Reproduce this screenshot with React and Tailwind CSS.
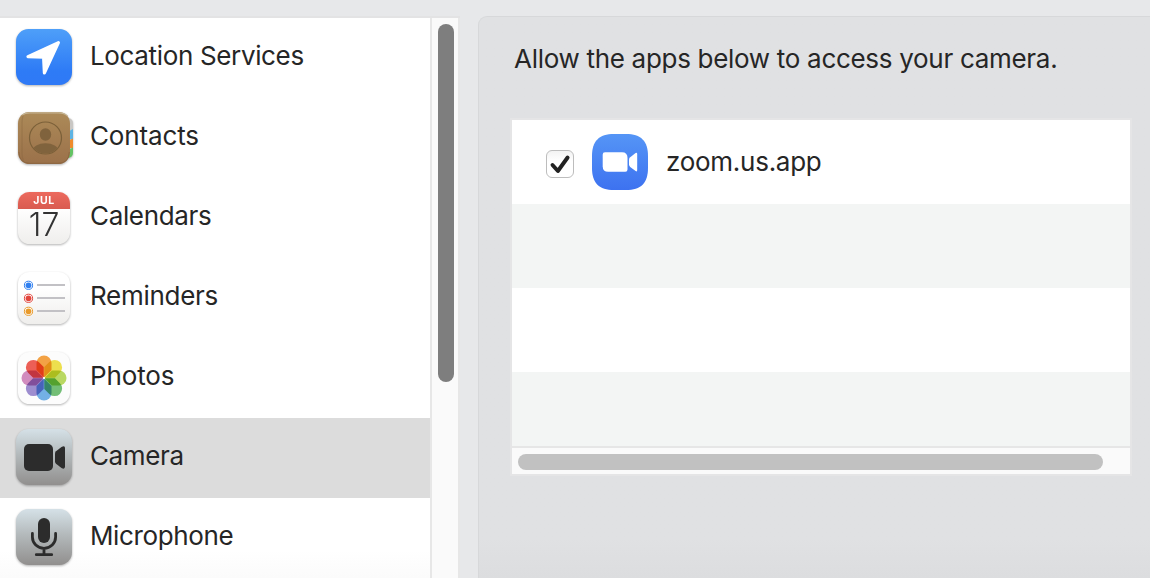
import { useState } from "react";

const LocationIcon = () => (
  <>
    <defs>
      <linearGradient id="loc" x1="0" y1="0" x2="0" y2="1">
        <stop offset="0" stopColor="#4e9ff9"/>
        <stop offset="0.75" stopColor="#2e7bf6"/>
        <stop offset="1" stopColor="#2f79f6"/>
      </linearGradient>
    </defs>
    <rect width="56" height="56" rx="12.5" fill="url(#loc)"/>
    <path d="M42.4 13.6 L12 27.6 L27.6 28.2 L28.4 43.8Z" fill="#fff" stroke="#fff" strokeWidth="3.2" strokeLinejoin="round"/>
  </>
);

const ContactsIcon = () => (
  <>
    <defs>
      <linearGradient id="leather" x1="0" y1="0" x2="0" y2="1">
        <stop offset="0" stopColor="#ac8a58"/>
        <stop offset="1" stopColor="#9b714a"/>
      </linearGradient>
      <clipPath id="contactTabs"><rect x="40" y="9" width="17" height="40" rx="5"/></clipPath>
      <clipPath id="contactFace"><circle cx="29.5" cy="29" r="15.5"/></clipPath>
    </defs>
    <g clipPath="url(#contactTabs)">
      <rect x="50" y="7" width="7" height="15" fill="#c9c7c4"/>
      <path d="M50 24 L57 20 V30 H50Z" fill="#5eb4e4"/>
      <path d="M50 33 L57 29.5 V39 H50Z" fill="#ef8b2c"/>
      <path d="M50 42.5 L57 38.5 V50 H50Z" fill="#63c363"/>
    </g>
    <rect x="2" y="3" width="52" height="52" rx="11.5" fill="url(#leather)"/>
    <path d="M7 6.5 Q6 10 6 14 V44 Q6 49 7.5 51.5" fill="none" stroke="#80603a" strokeOpacity="0.3" strokeWidth="1.3"/>
    <path d="M6 6 Q9 3.8 14 3.8 H42 Q49 3.8 51.5 7" fill="none" stroke="#c5b493" strokeWidth="1.2"/>
    <path d="M3 43 Q3 54.3 14 54.3 H42 Q53 54.3 53.3 43" fill="none" stroke="#7c5937" strokeOpacity="0.5"/>
    <circle cx="29.5" cy="29" r="16" fill="none" stroke="#7b6039" strokeWidth="1.2"/>
    <g clipPath="url(#contactFace)" fill="#80633d">
      <ellipse cx="29.5" cy="25.5" rx="5.7" ry="6.2"/>
      <ellipse cx="29.5" cy="42" rx="13" ry="7.7"/>
    </g>
  </>
);

const CalendarIcon = () => (
  <>
    <defs>
      <linearGradient id="calPaper" x1="0" y1="0" x2="0" y2="1">
        <stop offset="0.3" stopColor="#fff"/>
        <stop offset="1" stopColor="#efeeec"/>
      </linearGradient>
      <linearGradient id="calTop" x1="0" y1="0" x2="0" y2="1">
        <stop offset="0" stopColor="#ec6a5e"/>
        <stop offset="1" stopColor="#d95b50"/>
      </linearGradient>
      <clipPath id="calClip"><rect x="2" y="3" width="52" height="52" rx="11.5"/></clipPath>
    </defs>
    <g clipPath="url(#calClip)">
      <rect x="2" y="3" width="52" height="52" fill="url(#calPaper)"/>
      <rect x="2" y="3" width="52" height="17" fill="url(#calTop)"/>
    </g>
    <text x="28" y="15.2" textAnchor="middle" fill="#fff" className="text-[10.5px] font-bold tracking-[0.6px]">JUL</text>
    <text x="28.2" y="46.7" textAnchor="middle" fill="#333" className="text-[32px] font-light tracking-[0.3px]">17</text>
  </>
);

const RemindersIcon = () => (
  <>
    <rect x="2" y="3" width="52" height="52" rx="11.5" fill="url(#calPaper)"/>
    {[
      { y:16.3, color:"#2f7ff0" },
      { y:29.3, color:"#e2453c" },
      { y:42.3, color:"#e99a2b" },
    ].map(r => (
      <g key={r.y}>
        <circle cx="12.5" cy={r.y} r="4.1" fill="#fff" stroke={r.color} strokeWidth="1"/>
        <circle cx="12.5" cy={r.y} r="2.9" fill={r.color}/>
        <path d={`M21 ${r.y - 0.3}H49`} stroke="#bfbec2" strokeWidth="1.9"/>
      </g>
    ))}
  </>
);

const petals = ["#f29a35", "#ecdc3f", "#b3d555", "#67b96a", "#67a9e4", "#9583cb", "#cd82b8", "#ea5148"];

const PhotosIcon = () => (
  <>
    <rect x="2" y="3" width="52" height="52" rx="11.5" fill="#fcfcfc"/>
    <g className="isolate">
      {petals.map((c, i) => (
        <path key={c} d="M28 28.6 L20.5 21.1 V14 A7.5 7.5 0 0 1 35.5 14 V21.1Z" fill={c} fillOpacity="0.92" transform={`rotate(${i * 45} 28 29)`} className="mix-blend-multiply"/>
      ))}
    </g>
    <circle cx="28" cy="29" r="1.1" fill="#fff"/>
  </>
);

const SteelTile = () => (
  <>
    <defs>
      <linearGradient id="steel" x1="0" y1="0" x2="0" y2="1">
        <stop offset="0" stopColor="#d5e1e7"/>
        <stop offset="0.45" stopColor="#b4babc"/>
        <stop offset="1" stopColor="#918f8e"/>
      </linearGradient>
    </defs>
    <rect width="56" height="56" rx="12.5" fill="url(#steel)"/>
  </>
);

const CameraIcon = () => (
  <>
    <SteelTile/>
    <rect x="8" y="15" width="29" height="27" rx="5" fill="#2c2c2c"/>
    <path d="M39 24.5 Q39 23.3 40 22.3 L45.5 18 Q49 16.2 49 19 V37.5 Q49 40.8 45.5 39 L40 34.7 Q39 33.7 39 32.5Z" fill="#2c2c2c"/>
  </>
);

const MicIcon = () => (
  <>
    <SteelTile/>
    <rect x="22" y="9" width="12" height="25" rx="6" fill="#2c2c2c"/>
    <path d="M16.4 24.5 V28 A11.6 11.3 0 0 0 39.6 28 V24.5 M28 39.5 V45.5 M20.3 45.7 H35.7" fill="none" stroke="#2c2c2c" strokeWidth="2.8" strokeLinecap="round"/>
  </>
);

const ZoomIcon = () => (
  <svg viewBox="0 0 56 56" className="w-14 h-14 ml-[18px]">
    <defs>
      <linearGradient id="zoomBlue" x1="0" y1="0" x2="0" y2="1">
        <stop offset="0" stopColor="#5595f6"/>
        <stop offset="1" stopColor="#3d72f0"/>
      </linearGradient>
    </defs>
    <path d="M22 0 H34 C49 0 56 7 56 22 V34 C56 49 49 56 34 56 H22 C7 56 0 49 0 34 V22 C0 7 7 0 22 0Z" fill="url(#zoomBlue)"/>
    <path d="M13 18.3 H30 Q35.5 18.3 35.5 24 V35.5 Q35.5 37.7 33.3 37.7 H16.2 Q10.7 37.7 10.7 32.2 V20.6 Q10.7 18.3 13 18.3Z" fill="#fff"/>
    <path d="M37 25.6 Q37 24.2 38.2 23.2 L43.6 19 Q45.2 18.2 45.2 20 V36 Q45.2 38 43.6 37.1 L38.2 33 Q37 32 37 30.6Z" fill="#fff"/>
  </svg>
);

const services = [
  { label:"Location Services", Icon:LocationIcon,  text:"tracking-[-0.35px]" },
  { label:"Contacts",          Icon:ContactsIcon,  text:"tracking-[-0.15px]" },
  { label:"Calendars",         Icon:CalendarIcon,  text:"tracking-[-0.34px]" },
  { label:"Reminders",         Icon:RemindersIcon, text:"tracking-[-0.28px]" },
  { label:"Photos",            Icon:PhotosIcon,    text:"tracking-[-0.14px]" },
  { label:"Camera",            Icon:CameraIcon,    text:"tracking-[-0.38px]" },
  { label:"Microphone",        Icon:MicIcon,       text:"tracking-[-0.38px]" },
];

export default function App() {
  const [selected, setSelected] = useState("Camera");
  const [allowed,  setAllowed]  = useState(true);

  return (
    <div className="w-[1150px] h-[578px] overflow-hidden flex bg-[#e7e8ea] text-[#262626] text-[26px] leading-8 font-['Inter',sans-serif]">
      {/* Sidebar */}
      <div className="w-[460px] h-[562px] mt-4 flex shrink-0 border-t-2 border-[#e3e3e4]">
        <div className="w-[430px] bg-gradient-to-b from-white from-[95%] to-[#fbfbfb]">
          {services.map(({ label, Icon, text }) => (
            <div
              key={label}
              onClick={() => setSelected(label)}
              className={`h-20 pl-4 flex items-center ${selected === label ? "bg-[#dcdcdc]" : ""}`}
            >
              <svg viewBox="0 0 56 56" className="w-14 h-14 -mt-0.5 overflow-visible drop-shadow-[0_1px_1px_rgba(0,0,0,0.3)]">
                <Icon/>
              </svg>
              <span className={`ml-[18px] -mt-1 whitespace-nowrap ${text}`}>{label}</span>
            </div>
          ))}
        </div>
        <div className="w-[30px] border-x-2 border-[#e7e7e7] bg-[#fafafa] pt-1.5 pl-1.5">
          <div className="w-4 h-[358px] rounded-full bg-[#7e7e7e]"/>
        </div>
      </div>

      {/* Camera panel */}
      <div className="flex-1 ml-[18px] mt-4 pl-8 pt-[26px] rounded-tl-[9px] border-l border-t border-[#d7d8da] bg-gradient-to-b from-[#e0e1e3] from-[93%] to-[#dcdddf]">
        <p className="ml-[3px] h-8 whitespace-nowrap tracking-[-0.3px]">Allow the apps below to access your camera.</p>
        <div className="mt-[43px] -ml-px w-[622px] border-2 border-[#e5e5e6] bg-white">
          <div className="h-[84px] pl-[34px] flex items-center">
            <button
              onClick={() => setAllowed(a => !a)}
              className="w-7 h-7 mt-[3px] rounded-[6px] border border-[#bdbdbd] bg-gradient-to-b from-[#f3f3f3] to-white to-40% flex items-center justify-center"
            >
              {allowed && (
                <svg viewBox="0 0 26 26" className="w-[26px] h-[26px]">
                  <path d="M5.5 14 L10.9 20 L20.6 6.5" fill="none" stroke="#222" strokeWidth="3.9" strokeLinecap="round" strokeLinejoin="round"/>
                </svg>
              )}
            </button>
            <ZoomIcon/>
            <span className="ml-[18px] tracking-[-0.27px]">zoom.us.app</span>
          </div>
          <div className="h-[84px] bg-[#f3f5f4]"/>
          <div className="h-[84px]"/>
          <div className="h-[74px] bg-[#f3f5f4]"/>
          <div className="h-7 border-t-2 border-[#e6e6e6] bg-[#fafafa] pt-1.5 pl-1.5">
            <div className="w-[585px] h-4 rounded-full bg-[#c1c1c1]"/>
          </div>
        </div>
      </div>
    </div>
  );
}
